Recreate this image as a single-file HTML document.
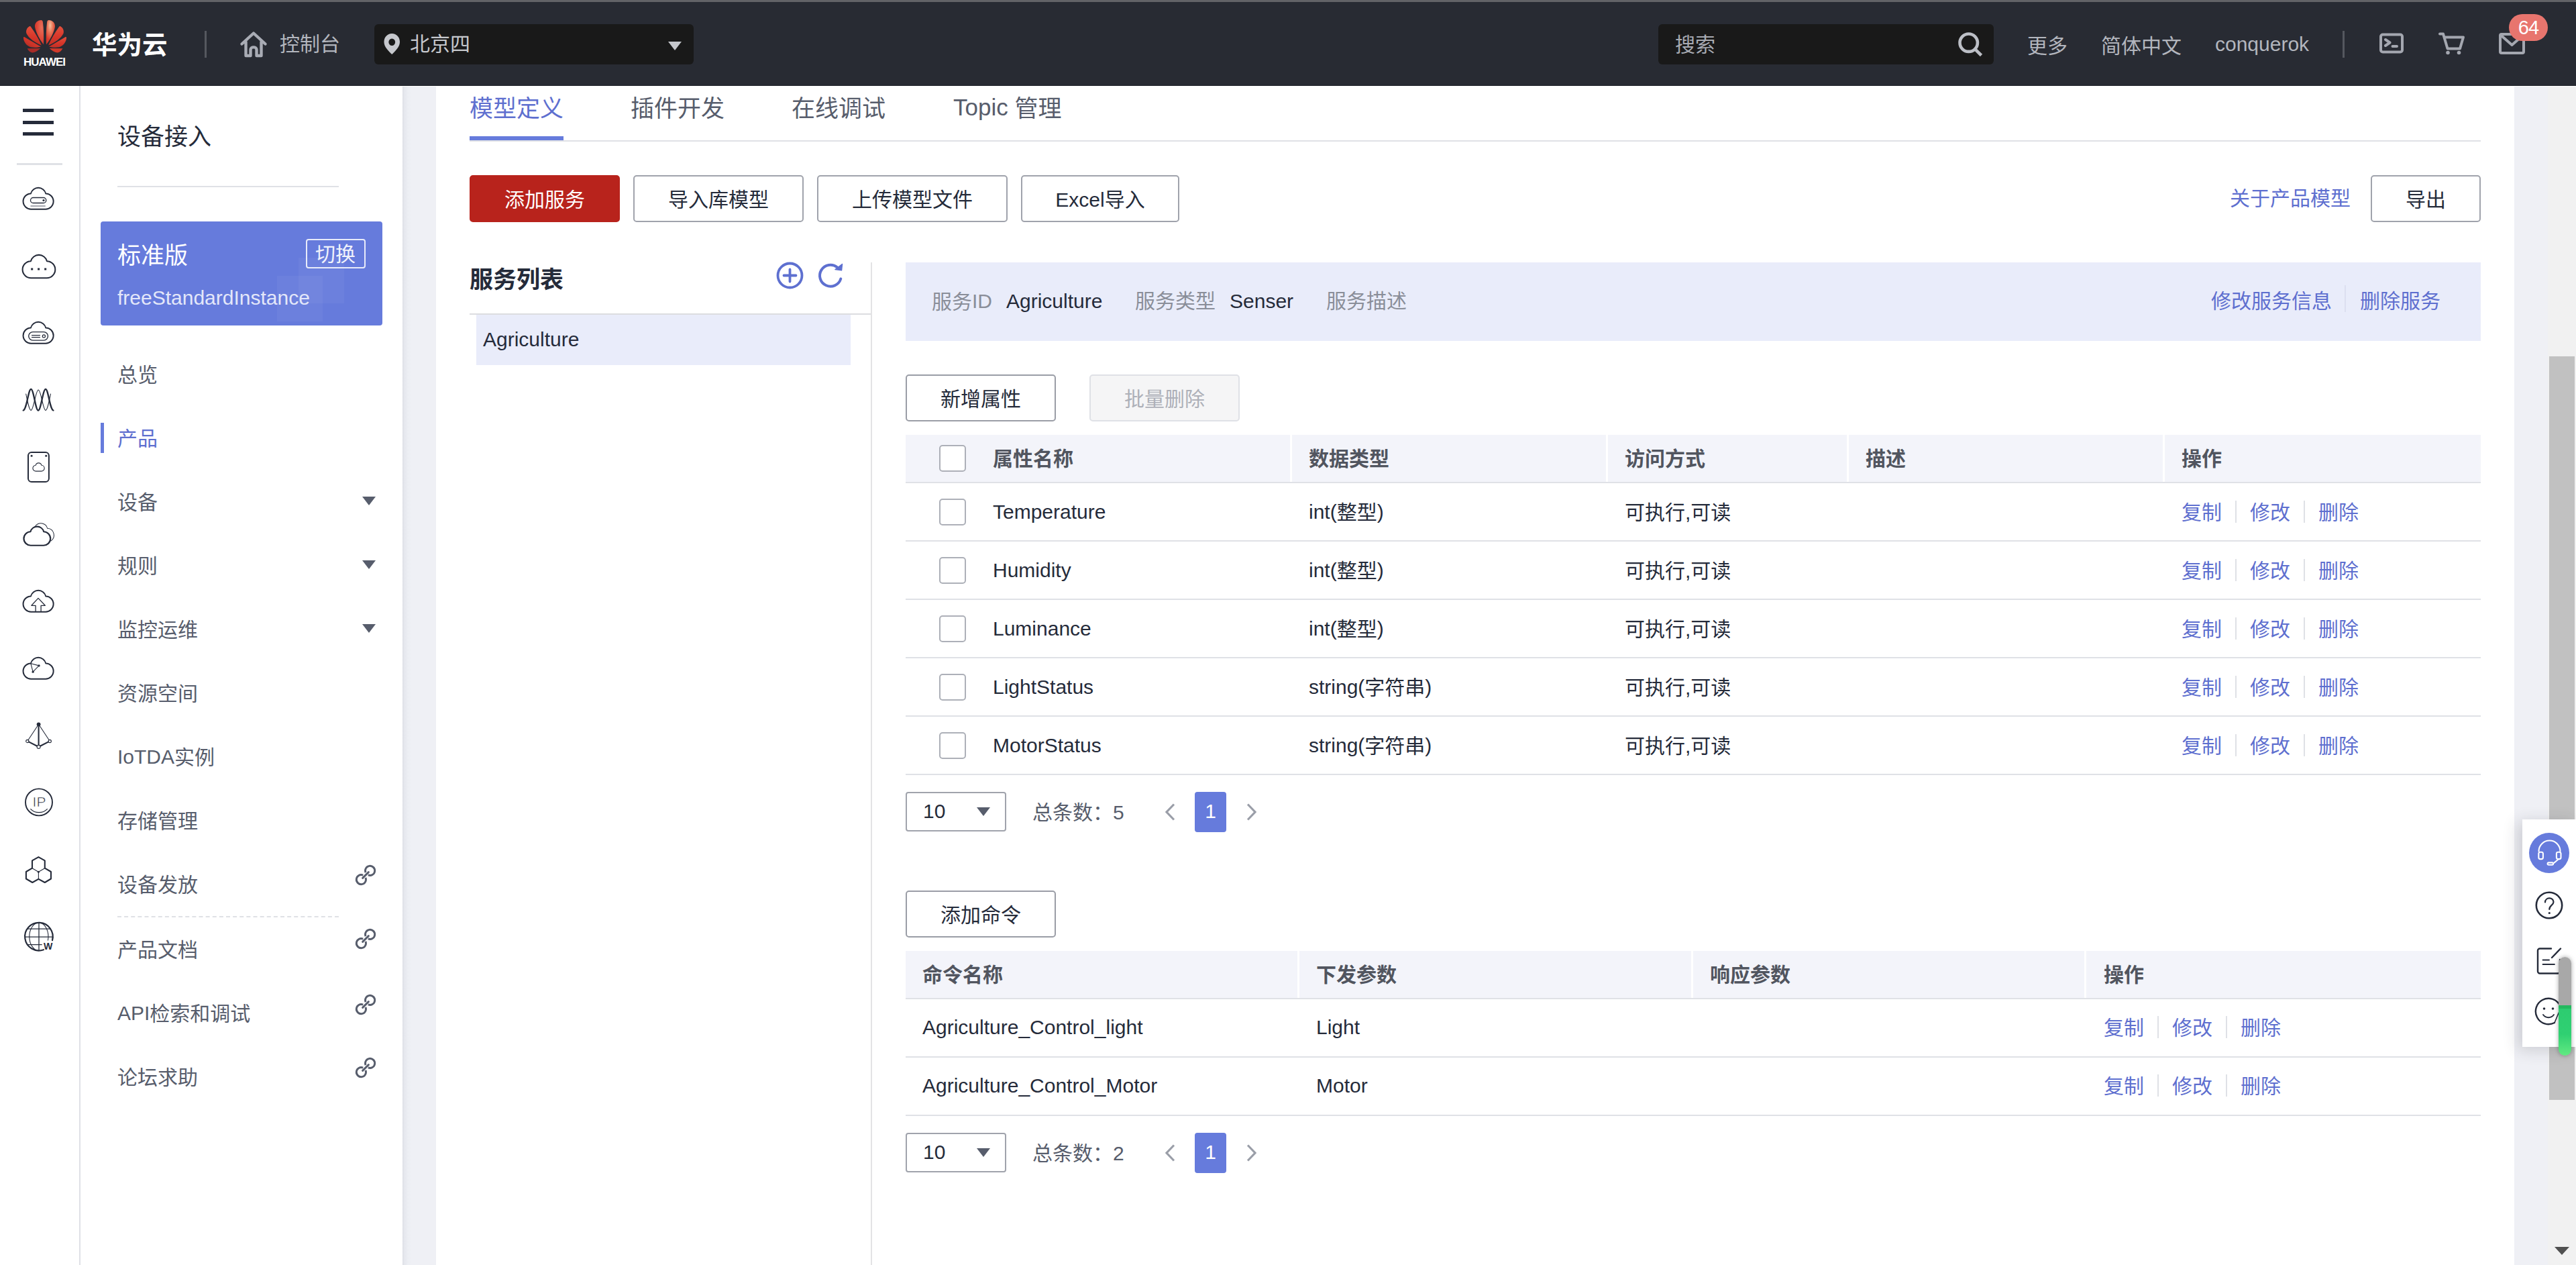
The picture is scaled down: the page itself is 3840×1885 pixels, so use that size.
<!DOCTYPE html>
<html lang="zh-CN">
<head>
<meta charset="utf-8">
<title>设备接入 - 华为云控制台</title>
<style>
*{box-sizing:border-box;margin:0;padding:0}
html,body{width:3840px;height:1885px;overflow:hidden;background:#fff}
body{position:relative;font-family:"Liberation Sans","Noto Sans CJK SC",sans-serif;font-size:30px;color:#252b3a}
.a{position:absolute}
.t{position:absolute;white-space:nowrap;height:40px;line-height:40px}
.f35{font-size:35px}
.b{font-weight:bold}
.g{color:#575d6c}
.lk{color:#5e6fcf}
svg{position:absolute;overflow:visible}
/* header */
#strip{left:0;top:0;width:3840px;height:3px;background:#626367}
#hdr{left:0;top:3px;width:3840px;height:125px;background:#282b33;border-bottom:1px solid #1e2128}
.hd{color:#b3b6be}
/* layout */
#rail{left:0;top:128px;width:120px;height:1757px;background:#fff;border-right:2px solid #dfe1e6}
#side{left:120px;top:128px;width:480px;height:1757px;background:#fff}
#gap{left:600px;top:129px;width:50px;height:1756px;background:linear-gradient(90deg,#dddfe6 0,#e6e8ee 3px,#eceef3 8px,#eff0f5 14px,#eff0f5 100%)}
#main{left:650px;top:128px;width:3098px;height:1757px;background:#fff}
#rgap{left:3748px;top:129px;width:50px;height:1756px;background:#eff0f5}
#sbar{left:3798px;top:129px;width:42px;height:1756px;background:#f1f1f1}
#thumb{left:3800px;top:531px;width:38px;height:1108px;background:#c1c1c1}
.btn{position:absolute;height:70px;line-height:63px;padding-top:3px;border:2px solid #a0a3ac;border-radius:5px;text-align:center;background:#fff;white-space:nowrap}
.hl{position:absolute;height:2px;background:#dfe1e6}
.cb{position:absolute;width:40px;height:40px;border:2px solid #adb0b8;border-radius:5px;background:#fff}
.th{position:absolute;background:#f3f4fa;height:70px}
.sep{position:absolute;width:2px;height:33px;background:#dfe1e6}
.c8{color:#8a8e99}
.hc{color:#51555f}
.cj2{position:relative;top:1.5px}
.cj{position:relative;top:0.5px}
.cj1{position:relative;top:1px}
</style>
</head>
<body>
<div class="a" id="strip"></div>
<div class="a" id="hdr"></div>
<!-- ===== top header ===== -->
<svg style="left:35px;top:30.3px" width="64" height="49" viewBox="0 0 64 49">
<defs>
<linearGradient id="lg1" x1="0" y1="0" x2="0" y2="1"><stop offset="0" stop-color="#e2513d"/><stop offset="0.55" stop-color="#d8372a"/><stop offset="1" stop-color="#c22f25"/></linearGradient>
<linearGradient id="lg3" x1="1" y1="0" x2="0" y2="1"><stop offset="0" stop-color="#d8372a"/><stop offset="0.6" stop-color="#cf3428"/><stop offset="1" stop-color="#9a2a27"/></linearGradient>
<radialGradient id="lg2" cx="0.55" cy="0.22" r="0.62"><stop offset="0" stop-color="#f6bf9c"/><stop offset="0.45" stop-color="#ea7a5c"/><stop offset="1" stop-color="#d8372a"/></radialGradient>
<radialGradient id="lg4" cx="0.75" cy="0.3" r="0.7"><stop offset="0" stop-color="#e8705a"/><stop offset="1" stop-color="#d8372a"/></radialGradient>
<path id="p1" d="M29.900,36.200 C24,29 18.500,18 17,10 C16.400,4 21,0.300 26.200,0 C28,0 28.900,1.500 28.900,3 C30.300,14 30.500,25 29.900,36.200Z"/>
<path id="p2" d="M26.900,37.500 C17,33.500 8,27 4.500,20 C3.200,16 5,11 9.300,9 C10,8.800 10.500,9.200 11,10 C17,18.500 23,28.500 26.900,37.500Z"/>
<path id="p3" d="M25.900,39.500 L1.200,25 C0.200,24.700 -0.200,25.500 0,27 C0.500,33 5,38.500 11,40.300 C16,41.200 22,40.800 25.900,39.500Z"/>
<path id="p4" d="M5.600,42.300 L25.200,41.900 C22,45 18,48 13.600,48.500 C10.500,48.300 7.500,46 5.600,42.300Z"/>
</defs>
<use href="#p1" fill="url(#lg4)"/><use href="#p2" fill="url(#lg1)"/><use href="#p3" fill="url(#lg3)"/><use href="#p4" fill="#a82c27"/>
<g transform="translate(64,0) scale(-1,1)"><use href="#p1" fill="url(#lg2)"/><use href="#p2" fill="url(#lg1)"/><use href="#p3" fill="url(#lg1)"/><use href="#p4" fill="#cf3a2b"/></g>
</svg>
<div class="a b" style="left:35px;top:83px;height:20px;line-height:20px;font-size:17px;color:#fff;letter-spacing:-1px;white-space:nowrap">HUAWEI</div>
<div class="t" style="left:137px;top:46.5px;font-size:37.5px;color:#fff;font-weight:700">华为云</div>
<div class="a" style="left:305px;top:46px;width:3px;height:40px;background:#55585f"></div>
<svg style="left:356px;top:45px" width="44" height="42" viewBox="0 0 44 42" fill="none" stroke="#a9acb5" stroke-width="4.4" stroke-linejoin="round" stroke-linecap="round">
<path d="M4.5,20.5 L22,4.5 L39.500,20.5 M10.5,17.5 V38 H17.5 V29 C17.5,24.2 26.500,24.2 26.500,29 V38 H33.500 V17.5"/>
</svg>
<div class="t hd" style="left:417px;top:46px">控制台</div>
<div class="a" style="left:558px;top:36px;width:476px;height:60px;background:#191919;border-radius:6px"></div>
<svg style="left:572px;top:50px" width="24.500" height="31" viewBox="0 0 26 31" preserveAspectRatio="none"><path d="M13,0 C5.600,0 0.500,5.600 0.500,12.400 C0.500,20 8,26 13,31 C18,26 25.500,20 25.500,12.400 C25.500,5.600 20.400,0 13,0Z M13,7.500 A5.200,5.200 0 1 1 13,17.900 A5.200,5.200 0 1 1 13,7.500Z" fill="#c6c8cd" fill-rule="evenodd"/></svg>
<div class="t" style="left:611px;top:46px;color:#c6c8cd">北京四</div>
<svg style="left:996px;top:62px" width="20" height="13" viewBox="0 0 20 13"><path d="M0,0 H20 L10,13Z" fill="#c6c8cd"/></svg>
<div class="a" style="left:2472px;top:36px;width:500px;height:60px;background:#191919;border-radius:6px"></div>
<div class="t" style="left:2497px;top:47px;color:#a8abb3">搜索</div>
<svg style="left:2919px;top:47.600px" width="37" height="37" viewBox="0 0 37 37" fill="none" stroke="#bcbfc6" stroke-width="4.600"><circle cx="15.700" cy="15.700" r="13.200"/><path d="M25.300,25.300 L34.500,34.500"/></svg>
<div class="t hd" style="left:3022px;top:49px">更多</div>
<div class="t hd" style="left:3132px;top:49px">简体中文</div>
<div class="t hd" style="left:3302px;top:46px">conquerok</div>
<div class="a" style="left:3492px;top:46px;width:3px;height:40px;background:#55585f"></div>
<svg style="left:3547px;top:49px" width="36" height="31" viewBox="0 0 36 31" fill="none" stroke="#a4a7b0" stroke-width="4" stroke-linecap="round" stroke-linejoin="round"><rect x="2" y="2.500" width="32" height="26" rx="3"/><path d="M9,10 L15.500,14.500 L9,19 M19.500,20 H26"/></svg>
<svg style="left:3635px;top:48px" width="40" height="34" viewBox="0 0 40 34" fill="none" stroke="#a4a7b0" stroke-width="4" stroke-linecap="round" stroke-linejoin="round"><path d="M2,2.500 H7 L13.500,24.500 H32 L37,7.500 H9.500"/><circle cx="14" cy="30.500" r="2.800" fill="#a4a7b0" stroke="none"/><circle cx="30.500" cy="30.500" r="2.800" fill="#a4a7b0" stroke="none"/></svg>
<svg style="left:3725px;top:49px" width="39" height="32" viewBox="0 0 39 32" fill="none" stroke="#a4a7b0" stroke-width="4" stroke-linejoin="round"><rect x="2" y="2" width="35" height="28" rx="2"/><path d="M3,3.500 L19.500,18 L36,3.500"/></svg>
<div class="a" style="left:3740px;top:21px;width:58px;height:40px;border-radius:20px;background:#e8756e;color:#fff;text-align:center;line-height:40px;font-size:29px;letter-spacing:-1px">64</div>

<!-- ===== layout blocks ===== -->
<div class="a" id="rail"></div>
<div class="a" id="side"></div>
<div class="a" id="gap"></div>
<div class="a" id="main"></div>
<div class="a" id="rgap"></div>
<div class="a" id="sbar"></div>
<div class="a" id="thumb"></div>
<svg style="left:3808px;top:1858px" width="22" height="12" viewBox="0 0 22 12"><path d="M0,0 H22 L11,12Z" fill="#505050"/></svg>

<!-- ===== icon rail ===== -->
<div class="a" style="left:34px;top:162px;width:46px;height:5px;background:#252b3a"></div>
<div class="a" style="left:34px;top:180px;width:46px;height:5px;background:#252b3a"></div>
<div class="a" style="left:34px;top:197px;width:46px;height:5px;background:#252b3a"></div>
<div class="a" style="left:25px;top:243px;width:68px;height:3px;background:#dfe1e6"></div>
<svg width="0" height="0"><defs>
<path id="cloud" d="M12.450,32.650 H33.760 A11.600,11.600 0 1 0 34.300,9.400 A11.600,11.600 0 0 0 11.900,9.400 A11.600,11.600 0 1 0 12.450,32.650Z"/>
</defs></svg>
<svg style="left:34.450px;top:279.100px" width="46.200" height="33.500" viewBox="0 0 46.200 33.500" fill="none" stroke="#252b3a" stroke-width="2" stroke-linejoin="round" stroke-linecap="round">
<use href="#cloud"/><rect x="11.500" y="15.500" width="23.300" height="8" rx="4" stroke-width="1.300"/><circle cx="31" cy="19.500" r="1.600" fill="#252b3a" stroke="none"/><path d="M12,27.900 H33.200" stroke-width="1.500" stroke="#8a8d98"/></svg>
<svg style="left:32.800px;top:378.600px" width="49.900" height="36.200" viewBox="0 0 46.200 33.500" fill="none" stroke="#252b3a" stroke-width="1.900" stroke-linejoin="round">
<use href="#cloud"/><path d="M12.200,18.900 h2.800 v2.800 h-2.800z M21.400,18.900 h2.800 v2.800 h-2.800z M30.700,18.900 h2.800 v2.800 h-2.800z" fill="#252b3a" stroke="none"/></svg>
<svg style="left:34.450px;top:478.900px" width="46.200" height="33.500" viewBox="0 0 46.200 33.500" fill="none" stroke="#252b3a" stroke-width="2" stroke-linejoin="round" stroke-linecap="round">
<use href="#cloud"/><rect x="8.700" y="15.600" width="28.800" height="12.500" rx="6.250" stroke-width="1.400"/><path d="M13.500,20.600 H25.500 M13.500,23.600 H25.500" stroke-width="1.300"/><circle cx="31.400" cy="21.900" r="2.100" stroke-width="1.200"/></svg>
<svg style="left:34.450px;top:579.100px" width="46.200" height="33.500" viewBox="0 0 46.200 33.500" fill="none" stroke="#252b3a" stroke-linecap="round">
<path d="M0.700,32.500 C6,31 8.200,0.800 12.200,0.800 C16.200,0.800 19,32.600 23,32.600 C27,32.600 30,0.800 34,0.800 C38,0.800 40.200,31 45.500,32.500" stroke-width="2.300"/>
<path d="M4.700,8 C7.300,20 9.500,32.400 12.200,32.400 C16.200,32.400 19.200,2 23.200,2 C27.200,2 30,32.400 34,32.400 C36.700,32.400 38.900,20 41.500,8" stroke-width="1.100"/></svg>
<svg style="left:41.100px;top:673.100px" width="32.900" height="45.900" viewBox="0 0 32.900 45.900" fill="none" stroke="#252b3a" stroke-width="2" stroke-linejoin="round">
<rect x="1" y="1" width="30.900" height="43.900" rx="5"/><circle cx="6.100" cy="6.300" r="1.500" fill="#252b3a" stroke="none"/><circle cx="27.700" cy="6.300" r="1.500" fill="#252b3a" stroke="none"/>
<g transform="translate(7.700,16.600) scale(0.383)" stroke-width="2.900"><use href="#cloud"/></g></svg>
<svg style="left:35px;top:778.600px" width="47" height="34.500" viewBox="0 0 47 34.500" fill="none" stroke="#252b3a" stroke-linejoin="round" stroke-linecap="round">
<g transform="translate(0,5) scale(0.880)" stroke-width="2.500"><use href="#cloud"/></g>
<g transform="translate(5.500,0) scale(0.880)" stroke-width="1.150"><path d="M14.200,5 A11.600,11.600 0 0 1 34.300,9.400 A11.600,11.600 0 0 1 40.100,30.700"/></g></svg>
<svg style="left:34.450px;top:878.900px" width="46.200" height="33.500" viewBox="0 0 46.200 33.500" fill="none" stroke="#252b3a" stroke-width="2" stroke-linejoin="round">
<use href="#cloud"/><path d="M19.100,32.600 V23.300 H12.900 L23,12.400 L33.300,23.300 H27.100 V32.600" stroke-width="1.300"/></svg>
<svg style="left:34.450px;top:978.900px" width="46.200" height="33.500" viewBox="0 0 46.200 33.500" fill="none" stroke="#252b3a" stroke-width="2" stroke-linejoin="round">
<use href="#cloud"/><path d="M11.900,9.700 L24.100,12.900 L15.100,22.200Z" stroke-width="1.100"/><circle cx="24.100" cy="12.900" r="1.600" fill="#252b3a" stroke="none"/><circle cx="15.100" cy="22.200" r="1.600" fill="#252b3a" stroke="none"/></svg>
<svg style="left:37px;top:1075px" width="42" height="42" viewBox="0 0 42 42" fill="none" stroke="#252b3a" stroke-linecap="round">
<path d="M20.600,4.300 L3.800,29.500 M20.600,4.300 L37.300,29.500" stroke-width="1.100"/><path d="M20.600,4.300 V36 M5.800,30.400 L18.300,36.700 M35.300,30.400 L22.900,36.700" stroke-width="2.100"/>
<circle cx="20.600" cy="4.300" r="2.900" fill="#252b3a" stroke="none"/><circle cx="3.800" cy="29.500" r="2.100" fill="#fff" stroke-width="1.100"/><circle cx="37.300" cy="29.500" r="2.100" fill="#fff" stroke-width="1.100"/><circle cx="20.600" cy="37.900" r="2.500" fill="#fff" stroke-width="1.100"/></svg>
<svg style="left:36.500px;top:1173.500px" width="43" height="43" viewBox="0 0 43 43" fill="none" stroke="#252b3a">
<circle cx="21" cy="21.400" r="20" stroke-width="1.900"/><path d="M8.700,31.600 C15,38.300 27,38.300 33.400,31.600" stroke-width="1.200" stroke-linecap="round"/>
<text x="11.600" y="28.300" font-family="Liberation Sans,sans-serif" font-size="21" fill="#252b3a" stroke="#fff" stroke-width="0.600">IP</text></svg>
<svg style="left:38px;top:1275.500px" width="39" height="40" viewBox="0 0 39 40" fill="none" stroke="#252b3a" stroke-width="2.100" stroke-linejoin="round">
<path d="M10,17.700 V6.400 L19.400,1.100 L28.800,6.400 V17.700 L38,23 V33.500 L28.800,39 L19.400,33.800 L10.300,39 L0.900,33.500 V23Z"/><path d="M10,17.700 L19.400,23.200 L28.800,17.700 M19.400,23.200 V33.800" stroke-width="1.100"/><circle cx="19.400" cy="23.200" r="1.500" fill="#252b3a" stroke="none"/></svg>
<svg style="left:35px;top:1373px" width="46" height="46" viewBox="0 0 46 46" fill="none" stroke="#252b3a">
<path d="M30,42.200 A20.800,20.800 0 1 1 43,28.100" stroke-width="2.200" stroke-linecap="round"/>
<path d="M23,2 V43.400 M5.600,11.200 H40.200 M2.200,23.200 H43.600 M5.600,34.600 H27.700" stroke-width="1.300"/><path d="M22.900,43.500 A14.100,20.800 0 0 1 22.900,1.900 A14.100,20.800 0 0 1 36.400,28.500" stroke-width="1.100"/>
<text x="36.800" y="41.500" text-anchor="middle" font-family="Liberation Sans,sans-serif" font-weight="bold" font-size="14.200" fill="#252b3a" stroke="none">W</text></svg>

<!-- ===== service side menu ===== -->
<div class="t f35" style="left:175px;top:182px;height:44px;line-height:44px">设备接入</div>
<div class="hl" style="left:175px;top:277px;width:330px"></div>
<div class="a" style="left:150px;top:330px;width:420px;height:155px;background:#667bdc;border-radius:4px;overflow:hidden">
<div class="a" style="left:263px;top:81px;width:68px;height:68px;background:rgba(255,255,255,.045)"></div>
<div class="a" style="left:295px;top:54px;width:68px;height:68px;background:rgba(255,255,255,.045)"></div>
</div>
<div class="t f35" style="left:175px;top:359px;height:44px;line-height:44px;color:#fff">标准版</div>
<div class="a" style="left:456px;top:356px;width:89px;height:44px;border:2px solid rgba(255,255,255,.85);border-radius:4px"></div>
<div class="t" style="left:470px;top:359px;color:#f0f2fb">切换</div>
<div class="t" style="left:175px;top:424px;color:#e3e7f9">freeStandardInstance</div>
<div class="t g" style="left:175px;top:539px">总览</div>
<div class="a" style="left:150px;top:630px;width:5px;height:45px;background:#667bdc"></div>
<div class="t lk" style="left:175px;top:634px">产品</div>
<div class="t g" style="left:175px;top:729px">设备</div>
<div class="t g" style="left:175px;top:824px">规则</div>
<div class="t g" style="left:175px;top:919px">监控运维</div>
<div class="t g" style="left:175px;top:1014px">资源空间</div>
<div class="t g" style="left:175px;top:1108px">IoTDA<span class="cj1">实例</span></div>
<div class="t g" style="left:175px;top:1204px">存储管理</div>
<div class="t g" style="left:175px;top:1299px">设备发放</div>
<div class="a" style="left:175px;top:1365px;width:330px;height:0;border-top:2px dashed #dfe1e6"></div>
<div class="t g" style="left:175px;top:1395.5px">产品文档</div>
<div class="t g" style="left:175px;top:1489.5px">API<span class="cj1">检索和调试</span></div>
<div class="t g" style="left:175px;top:1585.5px">论坛求助</div>
<svg style="left:540px;top:740px" width="20" height="13" viewBox="0 0 20 13"><path d="M0,0 H20 L10,13Z" fill="#575d6c"/></svg>
<svg style="left:540px;top:835px" width="20" height="13" viewBox="0 0 20 13"><path d="M0,0 H20 L10,13Z" fill="#575d6c"/></svg>
<svg style="left:540px;top:930px" width="20" height="13" viewBox="0 0 20 13"><path d="M0,0 H20 L10,13Z" fill="#575d6c"/></svg>
<svg width="0" height="0"><defs><g id="lnk" fill="none" stroke="#575d6c" stroke-width="2.900"><path d="M15.060,11.170 A7.100,7.100 0 1 1 18.830,14.940"/><path d="M14.940,18.830 A7.100,7.100 0 1 1 11.170,15.060"/><path d="M10.600,19.400 L19.400,10.600" stroke-linecap="round"/></g></defs></svg>
<svg style="left:529.500px;top:1289px" width="30" height="30" viewBox="0 0 30 30"><use href="#lnk"/></svg>
<svg style="left:529.500px;top:1384px" width="30" height="30" viewBox="0 0 30 30"><use href="#lnk"/></svg>
<svg style="left:529.500px;top:1481.500px" width="30" height="30" viewBox="0 0 30 30"><use href="#lnk"/></svg>
<svg style="left:529.500px;top:1576px" width="30" height="30" viewBox="0 0 30 30"><use href="#lnk"/></svg>

<!-- ===== main content ===== -->
<div class="t f35 lk" style="left:700px;top:139.5px;height:44px;line-height:44px">模型定义</div>
<div class="t f35 g" style="left:940px;top:139.5px;height:44px;line-height:44px">插件开发</div>
<div class="t f35 g" style="left:1180px;top:139.5px;height:44px;line-height:44px">在线调试</div>
<div class="t f35 g" style="left:1421px;top:138px;height:44px;line-height:44px">Topic <span class="cj2">管理</span></div>
<div class="a" style="left:700px;top:203px;width:140px;height:6px;background:#667bdc"></div>
<div class="hl" style="left:700px;top:209px;width:2998px"></div>
<div class="btn" style="left:700px;top:261px;width:224px;border-color:#b8231c;background:#b8231c;color:#fff">添加服务</div>
<div class="btn" style="left:944px;top:261px;width:254px">导入库模型</div>
<div class="btn" style="left:1218px;top:261px;width:284px">上传模型文件</div>
<div class="btn" style="left:1522px;top:261px;width:236px">Excel导入</div>
<div class="t lk" style="left:3324px;top:276px">关于产品模型</div>
<div class="btn" style="left:3534px;top:261px;width:164px">导出</div>
<div class="t f35 b" style="left:700px;top:395px;height:44px;line-height:44px">服务列表</div>
<svg style="left:1157px;top:390px" width="41" height="41" viewBox="0 0 41 41" fill="none" stroke="#5e70d0" stroke-width="3.800" stroke-linecap="round"><circle cx="20.500" cy="20.500" r="18"/><path d="M11.500,20.500 H29.500 M20.500,11.500 V29.500"/></svg>
<svg style="left:1219px;top:391px" width="40" height="40" viewBox="0 0 40 40" fill="none" stroke="#5e70d0" stroke-width="4" stroke-linecap="round"><path d="M34.300,24.500 A16,16 0 1 1 29,7.200"/><path d="M26,10.500 L35.500,11.800 L36.500,2.500 Z" fill="#5e70d0" stroke-width="1.500" stroke-linejoin="round"/></svg>
<div class="hl" style="left:700px;top:467px;width:599px;background:#dcdde0"></div>
<div class="a" style="left:1298px;top:391px;width:2px;height:1494px;background:#e3e3e5"></div>
<div class="a" style="left:710px;top:469px;width:558px;height:75px;background:#e9ecfa"></div>
<div class="t" style="left:720px;top:486px">Agriculture</div>
<div class="a" style="left:1350px;top:391px;width:2348px;height:117px;background:#e9ecfa"></div>
<div class="t c8" style="left:1389px;top:429px"><span class="cj">服务</span>ID</div>
<div class="t " style="left:1500px;top:429px">Agriculture</div>
<div class="t c8" style="left:1692px;top:429px">服务类型</div>
<div class="t " style="left:1833px;top:429px">Senser</div>
<div class="t c8" style="left:1977px;top:429px">服务描述</div>
<div class="t lk" style="left:3296px;top:429px">修改服务信息</div>
<div class="sep" style="left:3495px;top:425px;height:40px;background:#dcdff0"></div>
<div class="t lk" style="left:3518px;top:429px">删除服务</div>
<div class="btn" style="left:1350px;top:558px;width:224px;border-color:#9a9da6">新增属性</div>
<div class="btn" style="left:1624px;top:558px;width:224px;border-color:#dfe1e6;background:#f5f5f6;color:#adb0b8">批量删除</div>
<div class="th" style="left:1350px;top:648px;width:573px"></div>
<div class="th" style="left:1926px;top:648px;width:468px"></div>
<div class="th" style="left:2397px;top:648px;width:356px"></div>
<div class="th" style="left:2756px;top:648px;width:468px"></div>
<div class="th" style="left:3227px;top:648px;width:471px"></div>
<div class="hl" style="left:1350px;top:718px;width:2348px"></div>
<div class="cb" style="left:1400px;top:663px"></div>
<div class="t b hc" style="left:1480px;top:664px">属性名称</div>
<div class="t b hc" style="left:1951px;top:664px">数据类型</div>
<div class="t b hc" style="left:2422px;top:664px">访问方式</div>
<div class="t b hc" style="left:2781px;top:664px">描述</div>
<div class="t b hc" style="left:3252px;top:664px">操作</div>
<div class="cb" style="left:1400px;top:743px"></div>
<div class="t" style="left:1480px;top:743px">Temperature</div>
<div class="t" style="left:1951px;top:743px">int(<span class="cj">整型</span>)</div>
<div class="t" style="left:2422px;top:744px">可执行,可读</div>
<div class="t lk" style="left:3252px;top:744px">复制</div>
<div class="sep" style="left:3332px;top:746px"></div>
<div class="t lk" style="left:3354px;top:744px">修改</div>
<div class="sep" style="left:3434px;top:746px"></div>
<div class="t lk" style="left:3456px;top:744px">删除</div>
<div class="hl" style="left:1350px;top:805px;width:2348px"></div>
<div class="cb" style="left:1400px;top:830px"></div>
<div class="t" style="left:1480px;top:830px">Humidity</div>
<div class="t" style="left:1951px;top:830px">int(<span class="cj">整型</span>)</div>
<div class="t" style="left:2422px;top:831px">可执行,可读</div>
<div class="t lk" style="left:3252px;top:831px">复制</div>
<div class="sep" style="left:3332px;top:833px"></div>
<div class="t lk" style="left:3354px;top:831px">修改</div>
<div class="sep" style="left:3434px;top:833px"></div>
<div class="t lk" style="left:3456px;top:831px">删除</div>
<div class="hl" style="left:1350px;top:892px;width:2348px"></div>
<div class="cb" style="left:1400px;top:917px"></div>
<div class="t" style="left:1480px;top:917px">Luminance</div>
<div class="t" style="left:1951px;top:917px">int(<span class="cj">整型</span>)</div>
<div class="t" style="left:2422px;top:918px">可执行,可读</div>
<div class="t lk" style="left:3252px;top:918px">复制</div>
<div class="sep" style="left:3332px;top:920px"></div>
<div class="t lk" style="left:3354px;top:918px">修改</div>
<div class="sep" style="left:3434px;top:920px"></div>
<div class="t lk" style="left:3456px;top:918px">删除</div>
<div class="hl" style="left:1350px;top:979px;width:2348px"></div>
<div class="cb" style="left:1400px;top:1004px"></div>
<div class="t" style="left:1480px;top:1004px">LightStatus</div>
<div class="t" style="left:1951px;top:1004px">string(<span class="cj">字符串</span>)</div>
<div class="t" style="left:2422px;top:1005px">可执行,可读</div>
<div class="t lk" style="left:3252px;top:1005px">复制</div>
<div class="sep" style="left:3332px;top:1007px"></div>
<div class="t lk" style="left:3354px;top:1005px">修改</div>
<div class="sep" style="left:3434px;top:1007px"></div>
<div class="t lk" style="left:3456px;top:1005px">删除</div>
<div class="hl" style="left:1350px;top:1066px;width:2348px"></div>
<div class="cb" style="left:1400px;top:1091px"></div>
<div class="t" style="left:1480px;top:1091px">MotorStatus</div>
<div class="t" style="left:1951px;top:1091px">string(<span class="cj">字符串</span>)</div>
<div class="t" style="left:2422px;top:1092px">可执行,可读</div>
<div class="t lk" style="left:3252px;top:1092px">复制</div>
<div class="sep" style="left:3332px;top:1094px"></div>
<div class="t lk" style="left:3354px;top:1092px">修改</div>
<div class="sep" style="left:3434px;top:1094px"></div>
<div class="t lk" style="left:3456px;top:1092px">删除</div>
<div class="hl" style="left:1350px;top:1153px;width:2348px"></div>
<div class="a" style="left:1350px;top:1180px;width:150px;height:59px;border:2px solid #a0a3ac;border-radius:4px"></div>
<div class="t" style="left:1376px;top:1189px">10</div>
<svg style="left:1456px;top:1203px" width="20" height="13" viewBox="0 0 20 13"><path d="M0,0 H20 L10,13Z" fill="#575d6c"/></svg>
<div class="t g" style="left:1539px;top:1191px">总条数：5</div>
<svg style="left:1736px;top:1197px" width="16" height="26" viewBox="0 0 16 26" fill="none" stroke="#9a9ea8" stroke-width="3.200"><path d="M14,1.500 L3,13 L14,24.500"/></svg>
<div class="a" style="left:1781px;top:1180px;width:47px;height:60px;background:#667bdc;border-radius:4px;color:#fff;text-align:center;line-height:58px">1</div>
<svg style="left:1858px;top:1197px" width="16" height="26" viewBox="0 0 16 26" fill="none" stroke="#9a9ea8" stroke-width="3.200"><path d="M2,1.500 L13,13 L2,24.500"/></svg>
<div class="btn" style="left:1350px;top:1327px;width:224px;border-color:#9a9da6">添加命令</div>
<div class="th" style="left:1350px;top:1417px;width:584px"></div>
<div class="th" style="left:1937px;top:1417px;width:584px"></div>
<div class="th" style="left:2524px;top:1417px;width:583px"></div>
<div class="th" style="left:3110px;top:1417px;width:588px"></div>
<div class="hl" style="left:1350px;top:1487px;width:2348px"></div>
<div class="t b hc" style="left:1375px;top:1433px">命令名称</div>
<div class="t b hc" style="left:1962px;top:1433px">下发参数</div>
<div class="t b hc" style="left:2549px;top:1433px">响应参数</div>
<div class="t b hc" style="left:3136px;top:1433px">操作</div>
<div class="t" style="left:1375px;top:1511px">Agriculture_Control_light</div>
<div class="t" style="left:1962px;top:1511px">Light</div>
<div class="t lk" style="left:3136px;top:1512px">复制</div>
<div class="sep" style="left:3216px;top:1514px"></div>
<div class="t lk" style="left:3238px;top:1512px">修改</div>
<div class="sep" style="left:3318px;top:1514px"></div>
<div class="t lk" style="left:3340px;top:1512px">删除</div>
<div class="hl" style="left:1350px;top:1574px;width:2348px"></div>
<div class="t" style="left:1375px;top:1598px">Agriculture_Control_Motor</div>
<div class="t" style="left:1962px;top:1598px">Motor</div>
<div class="t lk" style="left:3136px;top:1599px">复制</div>
<div class="sep" style="left:3216px;top:1601px"></div>
<div class="t lk" style="left:3238px;top:1599px">修改</div>
<div class="sep" style="left:3318px;top:1601px"></div>
<div class="t lk" style="left:3340px;top:1599px">删除</div>
<div class="hl" style="left:1350px;top:1661px;width:2348px"></div>
<div class="a" style="left:1350px;top:1688px;width:150px;height:59px;border:2px solid #a0a3ac;border-radius:4px"></div>
<div class="t" style="left:1376px;top:1697px">10</div>
<svg style="left:1456px;top:1711px" width="20" height="13" viewBox="0 0 20 13"><path d="M0,0 H20 L10,13Z" fill="#575d6c"/></svg>
<div class="t g" style="left:1539px;top:1699px">总条数：2</div>
<svg style="left:1736px;top:1705px" width="16" height="26" viewBox="0 0 16 26" fill="none" stroke="#9a9ea8" stroke-width="3.200"><path d="M14,1.500 L3,13 L14,24.500"/></svg>
<div class="a" style="left:1781px;top:1688px;width:47px;height:60px;background:#667bdc;border-radius:4px;color:#fff;text-align:center;line-height:58px">1</div>
<svg style="left:1858px;top:1705px" width="16" height="26" viewBox="0 0 16 26" fill="none" stroke="#9a9ea8" stroke-width="3.200"><path d="M2,1.500 L13,13 L2,24.500"/></svg>

<!-- ===== floating help widget ===== -->
<div class="a" style="left:3760px;top:1221px;width:80px;height:339px;background:#fff;box-shadow:-6px 4px 22px rgba(40,43,51,.19)"></div>
<div class="a" style="left:3770px;top:1241px;width:60px;height:60px;border-radius:30px;background:#667bdc"></div>
<svg style="left:3770px;top:1241px" width="60" height="60" viewBox="0 0 60 60" fill="none" stroke="#fff" stroke-width="2.100" stroke-linecap="round" stroke-linejoin="round">
<path d="M14.500,27.500 A16,16 0 0 1 46.500,27.500"/>
<rect x="14.300" y="28.700" width="6.600" height="10.400" rx="2.400"/><rect x="40.900" y="28.700" width="6.600" height="10.400" rx="2.400"/>
<path d="M43,40 L37,45"/><rect x="27.600" y="44.400" width="8.500" height="3.400" rx="1.700"/></svg>
<svg style="left:3779px;top:1328px" width="42" height="42" viewBox="0 0 42 42" fill="none" stroke="#252b3a" stroke-width="2.600" stroke-linecap="round">
<circle cx="21" cy="21" r="19.200"/><path d="M15,16.500 C15,8.500 27.500,8.500 27.500,16 C27.500,21 21.300,21 21.300,27" stroke-width="2.200"/><circle cx="21.300" cy="32.500" r="1.600" fill="#252b3a" stroke="none"/></svg>
<svg style="left:3781px;top:1411px" width="40" height="42" viewBox="0 0 40 42" fill="none" stroke="#252b3a" stroke-width="2.400" stroke-linecap="round" stroke-linejoin="round">
<path d="M22,2.500 H5 C3.500,2.500 2,4 2,5.500 V36.500 C2,38 3.500,39.500 5,39.500 H32 C33.500,39.500 35,38 35,36.500 V19"/><path d="M23,16 L36,2.500"/><path d="M9.500,19.500 H19 M9.500,26 H27" stroke-width="1.800"/></svg>
<svg style="left:3778px;top:1486px" width="42" height="42" viewBox="0 0 42 42" fill="none" stroke="#252b3a" stroke-width="2.400" stroke-linecap="round">
<path d="M38,12 A19.200,19.200 0 1 0 30,38"/><circle cx="14.500" cy="17" r="1.800" fill="#252b3a" stroke="none"/><circle cx="27.500" cy="17" r="1.800" fill="#252b3a" stroke="none"/><path d="M13,26 C17,31.500 25,31.500 29,26" stroke-width="2"/><path d="M36.500,22.500 L30,38" stroke-width="1.600"/></svg>
<div class="a" style="left:3814px;top:1426px;width:19px;height:147px;border-radius:9.500px;background:linear-gradient(180deg,#a8a8a8 0,#a8a8a8 72px,#23b95f 72px,#23b95f 77px,#2dcc70 77px,#2fd072 115px,#62ea82 147px);box-shadow:0 0 6px rgba(0,0,0,.35)"></div>

</body>
</html>
